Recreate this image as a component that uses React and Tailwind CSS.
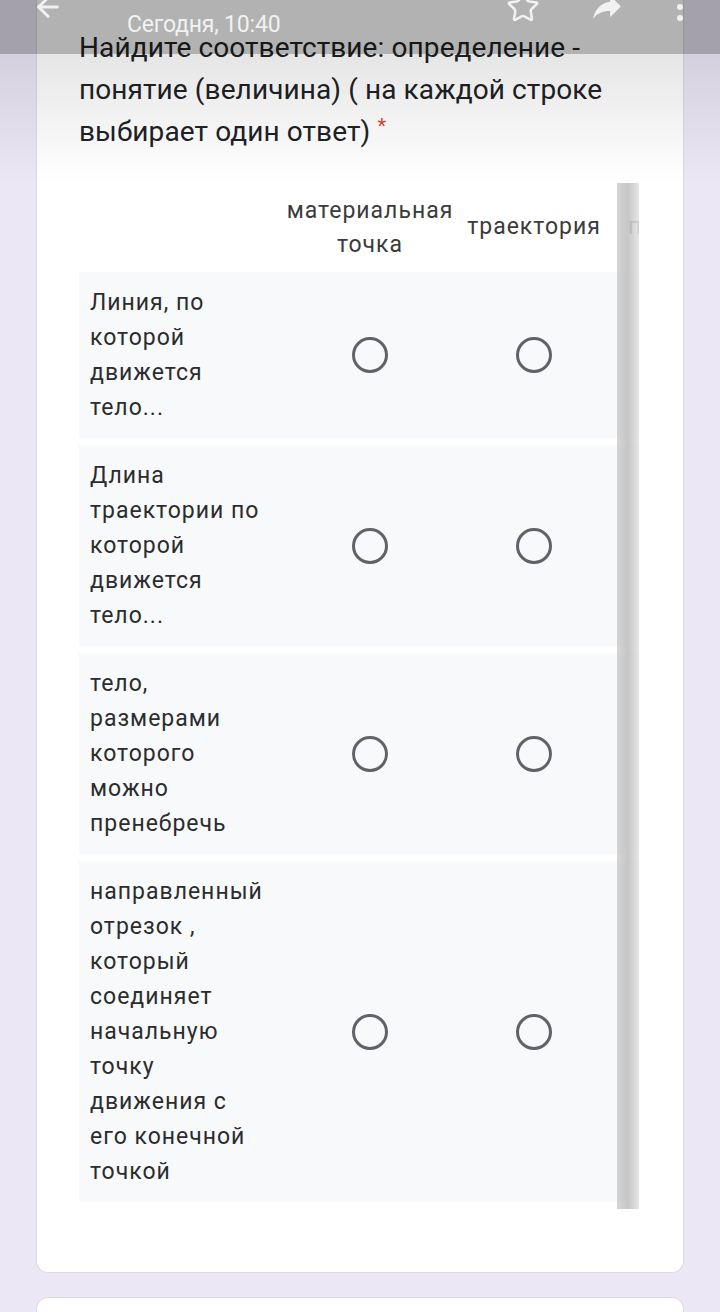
import { ArrowLeft, Star } from "lucide-react";

const rows = [
  ["Линия, по", "которой", "движется", "тело..."],
  ["Длина", "траектории по", "которой", "движется", "тело..."],
  ["тело,", "размерами", "которого", "можно", "пренебречь"],
  ["направленный", "отрезок ,", "который", "соединяет", "начальную", "точку", "движения с", "его конечной", "точкой"],
];

function Radio() {
  return <div className="w-[36px] h-[36px] rounded-full border-[3px] border-[#5f6368]" />;
}

function TopBar() {
  return (
    <div className="absolute top-0 left-0 w-full h-[54px] bg-black/30 text-[#f1f1f1]">
      <ArrowLeft className="absolute left-[32px] top-[-9px]" size={32} strokeWidth={2.2} />
      <div className="absolute left-[127px] top-[9px] text-[23px] leading-[32px] tracking-[-0.2px]">Сегодня, 10:40</div>
      <Star className="absolute left-[506px] top-[-10px]" size={34} strokeWidth={1.8} />
      <svg className="absolute left-[588px] top-[-9px]" width="38" height="34" viewBox="0 0 24 22" fill="currentColor">
        <path d="M14 7V3l7 7-7 7v-4.1c-5 0-8.5 1.6-11 5.1 1-5 4-10 11-11z" />
      </svg>
      <div className="absolute left-[677px] top-[-7px] flex flex-col gap-[5px]">
        <span className="w-[6px] h-[6px] rounded-full bg-[#f1f1f1]" />
        <span className="w-[6px] h-[6px] rounded-full bg-[#f1f1f1]" />
        <span className="w-[6px] h-[6px] rounded-full bg-[#f1f1f1]" />
      </div>
    </div>
  );
}

export default function App() {
  return (
    <div className="relative w-[720px] h-[1312px] overflow-hidden bg-[#ebe7f5]" style={{ fontFamily: "Roboto, 'Noto Sans', sans-serif" }}>
      <div className="mx-[36px] bg-white rounded-b-[12px] border border-t-0 border-[#dcd9e3] pt-[27px] px-[42px] pb-[63px]">
        <h1 className="text-[28px] leading-[42px] text-[#202124] font-normal tracking-[0.1px]">
          Найдите соответствие: определение - понятие (величина) ( на каждой строке выбирает один ответ){" "}
          <span className="text-[#d9473a] text-[20px] align-top leading-[30px]">*</span>
        </h1>

        <div className="relative mt-[30px] w-[560px] overflow-hidden">
          <div className="grid grid-cols-[191px_200px_128px_104px] w-max">
            <div className="h-[89px]" />
            <div className="h-[89px] flex items-center justify-center text-center text-[23px] leading-[34px] tracking-[1px] text-[#3a3b3d]">
              материальная<br />точка
            </div>
            <div className="h-[89px] flex items-center justify-center text-[23px] tracking-[1px] text-[#3a3b3d] whitespace-nowrap">траектория</div>
            <div className="h-[89px] flex items-center justify-start pl-[30px] text-[23px] text-[#7a7a7a] whitespace-nowrap">путь</div>

            {rows.map((lines, i) => (
              <div key={i} className="contents">
                <div className="bg-[#f8f9fa] pl-[11px] py-[13px] text-[23px] leading-[35px] tracking-[1px] text-[#2b2c2e] mb-[7px]">
                  {lines.map((l, j) => (
                    <div key={j} className="whitespace-nowrap">{l}</div>
                  ))}
                </div>
                <div className="bg-[#f8f9fa] flex items-center justify-center mb-[7px]"><Radio /></div>
                <div className="bg-[#f8f9fa] flex items-center justify-center mb-[7px]"><Radio /></div>
                <div className="bg-[#f8f9fa] mb-[7px]" />
              </div>
            ))}
          </div>
          <div className="absolute top-0 bottom-0 right-0 w-[22px] bg-gradient-to-r from-[#cdcdcd] via-[#bdbdbd] to-[#e2e2e2] opacity-85" />
        </div>
      </div>

      <div className="mx-[36px] mt-[24px] h-[40px] bg-white rounded-t-[12px] border border-b-0 border-[#dcd9e3]" />

      <div className="absolute top-[54px] left-0 w-full h-[130px] bg-gradient-to-b from-black/10 to-transparent pointer-events-none" />
      <TopBar />
    </div>
  );
}
